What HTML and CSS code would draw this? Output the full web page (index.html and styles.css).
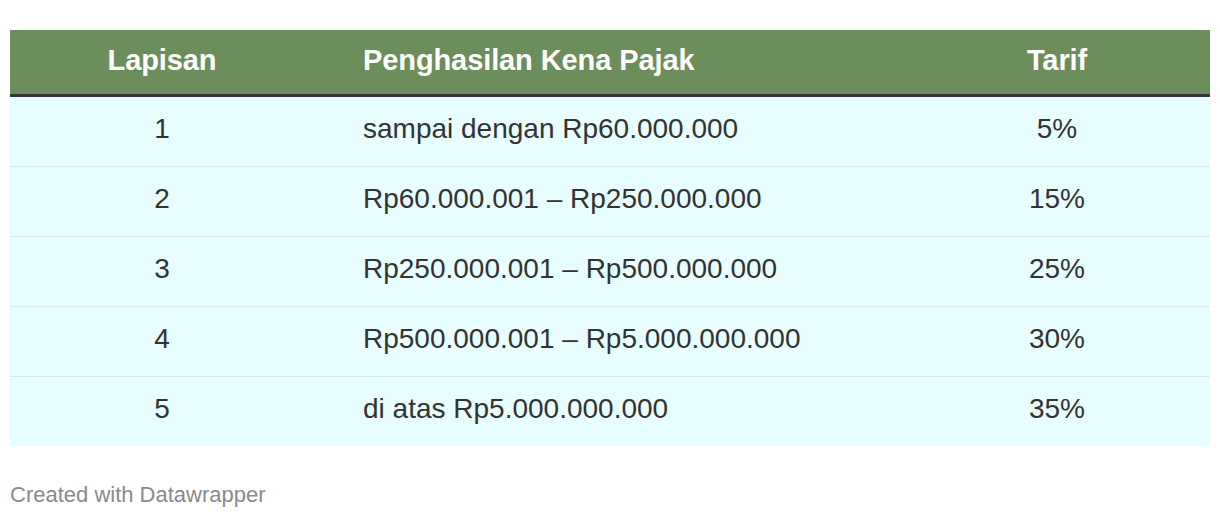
FILE: index.html
```html
<!DOCTYPE html>
<html>
<head>
<meta charset="utf-8">
<link rel="stylesheet" href="styles.css">
</head>
<body>
<div class="page">
  <div class="table">
    <div class="row head">
      <div class="cell c1">Lapisan</div>
      <div class="cell c2">Penghasilan Kena Pajak</div>
      <div class="cell c3">Tarif</div>
    </div>
    <div class="row">
      <div class="cell c1">1</div>
      <div class="cell c2">sampai dengan Rp60.000.000</div>
      <div class="cell c3">5%</div>
    </div>
    <div class="row">
      <div class="cell c1">2</div>
      <div class="cell c2">Rp60.000.001 – Rp250.000.000</div>
      <div class="cell c3">15%</div>
    </div>
    <div class="row">
      <div class="cell c1">3</div>
      <div class="cell c2">Rp250.000.001 – Rp500.000.000</div>
      <div class="cell c3">25%</div>
    </div>
    <div class="row">
      <div class="cell c1">4</div>
      <div class="cell c2">Rp500.000.001 – Rp5.000.000.000</div>
      <div class="cell c3">30%</div>
    </div>
    <div class="row">
      <div class="cell c1">5</div>
      <div class="cell c2">di atas Rp5.000.000.000</div>
      <div class="cell c3">35%</div>
    </div>
  </div>
  <div class="footer">Created with Datawrapper</div>
</div>
</body>
</html>
```
FILE: styles.css
```css
html, body {
  margin: 0;
  padding: 0;
  background: #fff;
}
body {
  font-family: "Liberation Sans", Arial, sans-serif;
  color: #333;
}
.page {
  padding: 30px 10px 0 10px;
}
.table {
  display: flex;
  flex-direction: column;
  background: #e8fdfd;
}
.row {
  display: grid;
  grid-template-columns: 304px 590px 306px;
  height: 69px;
  align-items: center;
  font-size: 28px;
  line-height: 32px;
  border-top: 1px solid #d3ebe8;
}
.row.head {
  height: 64px;
  background: #6c8e5b;
  color: #fff;
  font-weight: bold;
  font-size: 29px;
  letter-spacing: -0.1px;
  border-top: none;
  border-bottom: 3px solid #333;
}
.row.head .cell {
  padding-bottom: 4px;
}
.row.head + .row {
  border-top: none;
}
.row .cell {
  padding-bottom: 5px;
}
.cell.c1, .cell.c3 {
  text-align: center;
}
.cell.c2 {
  padding-left: 49px;
}
.footer {
  margin-top: 36px;
  font-size: 22px;
  line-height: 25px;
  color: #8a8a8a;
}
```
